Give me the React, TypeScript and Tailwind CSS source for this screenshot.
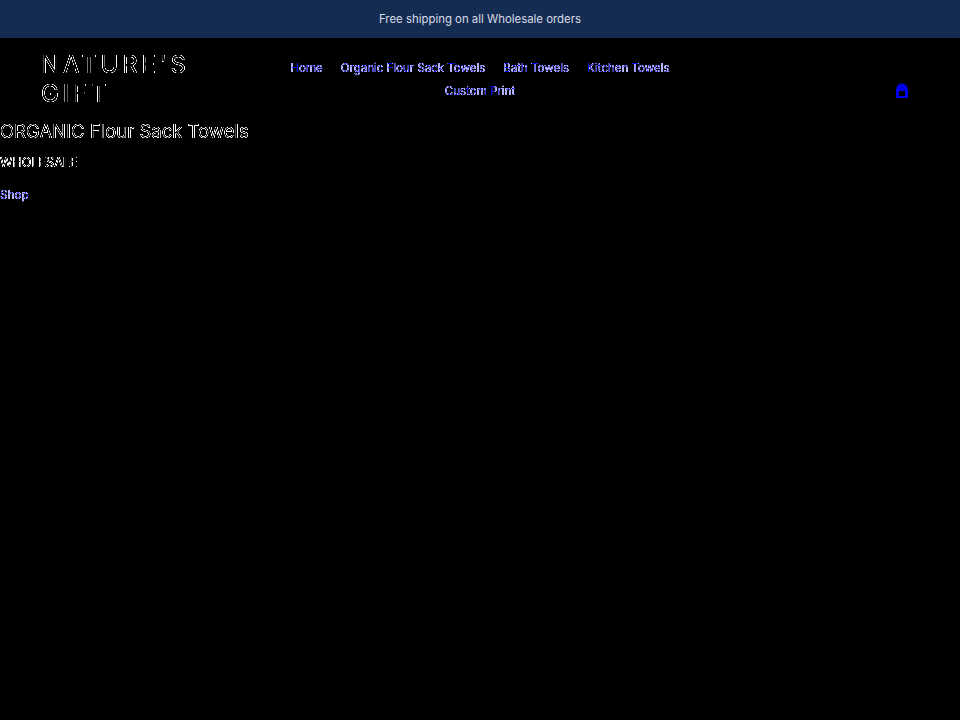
const navLinks = ["Home", "Organic Flour Sack Towels", "Bath Towels", "Kitchen Towels", "Custom Print"];

export default function App() {
  return (
    <div className="min-h-[720px] bg-black font-['Inter',sans-serif]">
      {/* Edge filters: only the soft edge of each glyph shows, solid stems drop out */}
      <svg width="0" height="0" className="absolute">
        <defs>
          <filter id="text-edge" x="0" y="0" width="100%" height="100%" colorInterpolationFilters="sRGB">
            <feComponentTransfer in="SourceGraphic">
              <feFuncA type="table" tableValues="0 1 1 0" />
            </feComponentTransfer>
          </filter>
          <filter id="link-edge" x="0" y="0" width="100%" height="100%" colorInterpolationFilters="sRGB">
            <feColorMatrix in="SourceGraphic" type="matrix" values="0 0 0 0 0.7  0 0 0 0 0.7  0 0 0 0 1  0 0 0 1 0" />
            <feComponentTransfer result="halo">
              <feFuncA type="table" tableValues="0 1 1 0" />
            </feComponentTransfer>
            <feMerge>
              <feMergeNode in="SourceGraphic" />
              <feMergeNode in="halo" />
            </feMerge>
          </filter>
        </defs>
      </svg>

      {/* Announcement bar */}
      <div className="flex h-[38px] items-center justify-center bg-[#152c52] pt-px text-[11.4px] text-[#d5dbe5]">
        Free shipping on all Wholesale orders
      </div>

      {/* Header */}
      <header className="grid grid-cols-[1fr_400px_1fr] items-start px-[50px] pt-[12px]">
        <a className="-ml-[9px] block w-[175px] text-[24px] leading-[29px] tracking-[3.8px] text-white [filter:url(#text-edge)]">
          NATURE'S GIFT
        </a>
        <nav className="flex flex-wrap justify-center gap-x-[18px] pt-[7px] text-[11.5px] leading-[23px] text-[#0000ee] [filter:url(#link-edge)]">
          {navLinks.map((link) => (
            <a key={link}>{link}</a>
          ))}
        </nav>
        <svg className="mt-[33px] h-[16px] w-[16px] justify-self-end text-[#0000ee]" viewBox="0 0 16 16" fill="currentColor" fillRule="evenodd">
          <path d="M2 15V8C2 3 4.5.5 8 .5S14 3 14 8v7zM5 8h6v5H5z" />
        </svg>
      </header>

      {/* Hero text */}
      <div className="mt-[10px]">
        <h1 className="text-[18.5px] leading-[26px] text-white [filter:url(#text-edge)]">ORGANIC Flour Sack Towels</h1>
        <p className="mt-[10px] text-[12.6px] leading-[18px] text-white [filter:url(#text-edge)]">WHOLESALE</p>
        <a className="mt-[13px] block text-[11.8px] leading-[20px] text-[#0000ee] [filter:url(#link-edge)]">Shop</a>
      </div>
    </div>
  );
}
